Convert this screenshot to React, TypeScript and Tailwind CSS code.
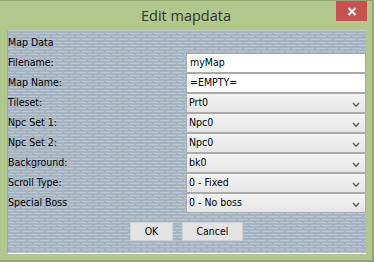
import React from "react";

const Chevron = () => (
  <svg width="8" height="6" viewBox="0 0 8 6" className="absolute right-[5px] top-[8px]">
    <path d="M1 1 L4 4.2 L7 1" fill="none" stroke="#5e5e5e" strokeWidth="1.6" />
  </svg>
);

const Input = ({ value }: { value: string }) => (
  <div className="h-[20px] border border-[#a9a9a9] bg-white flex items-center pl-[3px] text-black">
    {value}
  </div>
);

const Select = ({ value }: { value: string }) => (
  <div className="relative h-[20px] border border-[#ababab] bg-[linear-gradient(to_bottom,#f3f3f3,#e6e6e6)] flex items-center pl-[2px] text-black">
    {value}
    <Chevron />
  </div>
);

const rows: { label: string; kind: "input" | "select"; value: string }[] = [
  { label: "Filename:", kind: "input", value: "myMap" },
  { label: "Map Name:", kind: "input", value: "=EMPTY=" },
  { label: "Tileset:", kind: "select", value: "Prt0" },
  { label: "Npc Set 1:", kind: "select", value: "Npc0" },
  { label: "Npc Set 2:", kind: "select", value: "Npc0" },
  { label: "Background:", kind: "select", value: "bk0" },
  { label: "Scroll Type:", kind: "select", value: "0 - Fixed" },
  { label: "Special Boss", kind: "select", value: "0 - No boss" },
];

export default function App() {
  return (
    <div className="w-[374px] h-[262px] bg-[#b2c78b] border-t border-r-2 border-b-2 border-[#93a672] flex flex-col">
      <div className="relative h-[29px] flex items-center justify-center">
        <span className="font-['Open_Sans',sans-serif] text-[14.5px] text-[#333333] leading-none mt-[1px]">
          Edit mapdata
        </span>
        <div className="absolute right-[5px] top-0 w-[31px] h-[20px] bg-[#c75050] flex items-center justify-center">
          <svg width="10" height="9" viewBox="0 0 10 9">
            <path d="M1.5 1 L8.5 8 M8.5 1 L1.5 8" stroke="#ffffff" strokeWidth="2.2" />
          </svg>
        </div>
      </div>
      <div className="ml-[7px] w-[359px] h-[224px] border-t border-l border-b border-t-[#c3cad1] border-l-[#9ba8b5] border-b-[#f4f4f4] [background-color:#a6b4c1] [background-image:conic-gradient(from_270deg_at_2px_3px,#a6b4c1_90deg,transparent_0),conic-gradient(from_270deg_at_2px_3px,#a6b4c1_90deg,transparent_0),repeating-linear-gradient(to_bottom,transparent_0px,transparent_2px,#bcc7d1_2px,#bcc7d1_3px)] [background-size:12px_6px,12px_6px,8px_3px] [background-position:0_0,6px_3px,0_0] font-['DejaVu_Sans_Condensed','DejaVu_Sans',sans-serif] text-[10.5px] flex flex-col pt-[2px]">
        <div className="h-[20px] flex items-center text-black">Map Data</div>
        {rows.map((r) => (
          <div key={r.label} className="grid grid-cols-[178px_180px] h-[20px]">
            <div className="flex items-center text-black">{r.label}</div>
            {r.kind === "input" ? <Input value={r.value} /> : <Select value={r.value} />}
          </div>
        ))}
        <div className="flex justify-center gap-[9px] mt-[9px] pr-[1px]">
          <div className="w-[43px] h-[19px] bg-[#e3e3e3] border border-[#d2d2d2] flex items-center justify-center text-black">
            OK
          </div>
          <div className="w-[61px] h-[19px] bg-[#e3e3e3] border border-[#d2d2d2] flex items-center justify-center text-black">
            Cancel
          </div>
        </div>
      </div>
    </div>
  );
}
